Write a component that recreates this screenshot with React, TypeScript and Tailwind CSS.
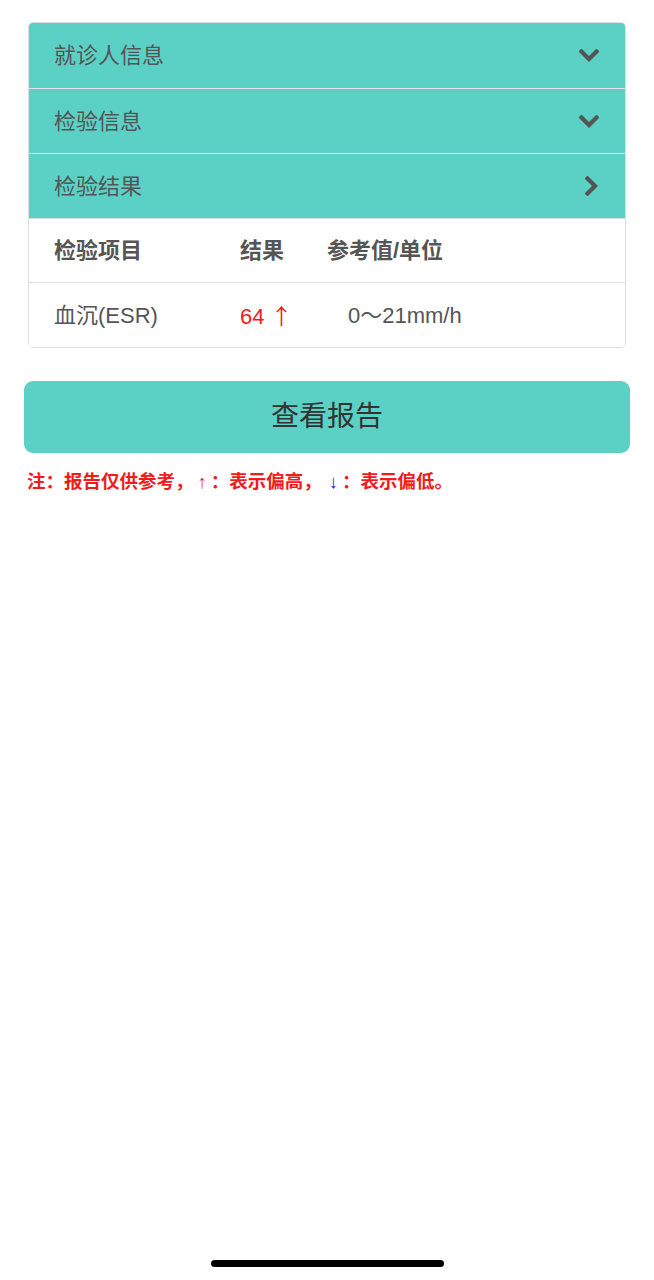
const FONT = '"Liberation Sans", "Noto Sans CJK SC", sans-serif';
const CJK = '"Noto Sans CJK SC", sans-serif';

function ChevronDown() {
  return (
    <svg width="20" height="13" viewBox="0 0 20 13" fill="none" className="block">
      <path d="M2.5 2.5L10 10L17.5 2.5" stroke="#555" strokeWidth="4.2" strokeLinecap="square" />
    </svg>
  );
}

function ChevronRight() {
  return (
    <svg width="13" height="20" viewBox="0 0 13 20" fill="none" className="block">
      <path d="M2.5 2.5L10 10L2.5 17.5" stroke="#555" strokeWidth="4.2" strokeLinecap="square" />
    </svg>
  );
}

const sections = [
  { title: "就诊人信息", open: true },
  { title: "检验信息", open: true },
  { title: "检验结果", open: false },
];

export default function App() {
  return (
    <div className="flex min-h-[1280px] flex-col bg-white" style={{ fontFamily: FONT }}>
      {/* accordion panel */}
      <div className="mx-[28px] mt-[22px] overflow-hidden rounded-[5px] border border-[#dedede]">
        {sections.map((s, i) => (
          <div
            key={s.title}
            className={`flex h-[65px] items-center justify-between bg-[#5bd1c5] pl-[25px] ${
              s.open ? "pr-[26px]" : "pr-[27px]"
            } ${i > 0 ? "border-t border-[#e6e0e0]" : ""}`}
          >
            <span className="text-[22px] text-[#555]">{s.title}</span>
            {s.open ? <ChevronDown /> : <ChevronRight />}
          </div>
        ))}

        {/* results table */}
        <div className="border-t border-[#dedede] bg-white">
          <div className="flex h-[64px] items-center border-b border-[#dedede] pl-[25px] text-[22px] font-bold text-[#555]">
            <span className="w-[186px]">检验项目</span>
            <span className="w-[87px]">结果</span>
            <span>参考值/单位</span>
          </div>
          <div className="flex h-[64px] items-center pl-[25px] text-[22px] text-[#555]">
            <span className="w-[186px]">血沉(ESR)</span>
            <span className="w-[108px] text-[#f21b1b]">
              64 <span style={{ fontFamily: CJK }}>↑</span>
            </span>
            <span>0～21mm/h</span>
          </div>
        </div>
      </div>

      {/* button */}
      <button className="mx-[24px] mt-[33px] h-[72px] rounded-[9px] bg-[#5bd1c5] text-[28px] text-[#333]">
        查看报告
      </button>

      <p className="mt-[15px] pl-[27px] text-[18.5px] font-bold text-[#f21b1b]">
        注：报告仅供参考，<span className="px-[4px] font-normal">↑</span>：表示偏高，
        <span className="pl-[7px] pr-[4px] font-normal text-[#1a1ae6]">↓</span>：表示偏低。
      </p>

      {/* home indicator */}
      <div className="mt-auto flex justify-center pb-[13px]">
        <div className="h-[7px] w-[233px] rounded-full bg-black" />
      </div>
    </div>
  );
}
